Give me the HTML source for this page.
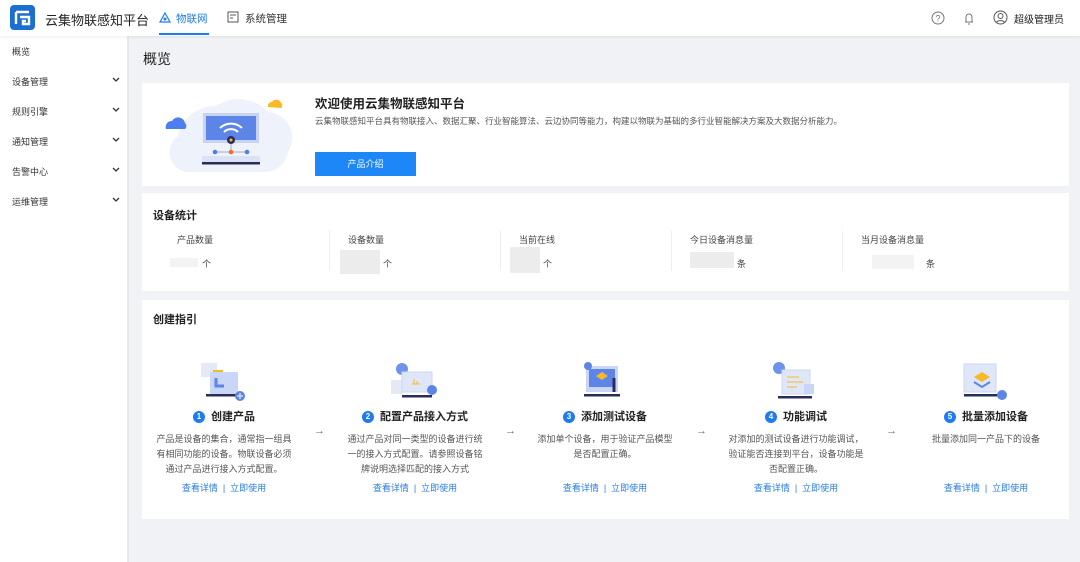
<!DOCTYPE html><html><head><meta charset="utf-8"><style>
*{margin:0;padding:0;box-sizing:border-box}
body{width:1080px;height:562px;overflow:hidden;background:#f0f2f5;font-family:"Liberation Sans","Noto Sans CJK SC",sans-serif;color:#333;position:relative}
.a{position:absolute}
.hd{left:0;top:0;width:1080px;height:36px;background:#fff;box-shadow:0 1px 3px rgba(0,0,0,.08);z-index:2}
.sb{left:0;top:36px;width:129px;height:526px;background:#fff;border-right:2px solid #e8e8e8}
.sb div{position:absolute;left:12px;font-size:9px;color:#333;width:112px}
.sb svg{position:absolute;right:4px;top:2px}
.card{background:#fff;left:142px;width:927px}
.t{font-size:11px;font-weight:bold;color:#222}
.lab{font-size:9px;color:#444}
.blk{background:#ececec}
.stp{position:absolute;width:170px;text-align:center;top:408px}
.stp h4{font-size:11px;font-weight:bold;color:#222}
.stp h4 i{display:inline-block;width:12px;height:12px;border-radius:6px;background:#1e7bf2;color:#fff;font-style:normal;font-size:8px;line-height:12px;margin-right:6px;vertical-align:1px}
.stp p{font-size:9px;color:#555;line-height:15px;margin-top:8px;height:45px}
.stp .l{font-size:9px;color:#2a7de1;margin-top:4px}
.arr{font-size:11px;color:#666;top:425px}
</style></head><body>
<div class="a hd">
<svg class="a" style="left:10px;top:5px" width="25" height="25" viewBox="0 0 25 25"><rect width="25" height="25" rx="4" fill="#1a6fd1"/><path d="M6 7h13M6 7v12M10 12h9v7h-6v-3h3" stroke="#fff" stroke-width="2.4" fill="none"/></svg>
<div class="a" style="left:45px;top:10px;font-size:13px;color:#222">云集物联感知平台</div>
<svg class="a" style="left:159px;top:12px" width="12" height="12" viewBox="0 0 12 12"><path d="M6 1L11 10H1Z" fill="none" stroke="#1e7bf2" stroke-width="1.2"/><circle cx="6" cy="7" r="1.5" fill="#1e7bf2"/></svg>
<div class="a" style="left:176px;top:11px;font-size:10.5px;color:#1e7bf2">物联网</div>
<div class="a" style="left:159px;top:33px;width:50px;height:2px;background:#1e7bf2"></div>
<svg class="a" style="left:227px;top:11px" width="12" height="12" viewBox="0 0 12 12"><rect x="1" y="1" width="10" height="10" fill="none" stroke="#555"/><path d="M3 4h6M3 7h3" stroke="#555"/></svg>
<div class="a" style="left:245px;top:11px;font-size:10.5px;color:#333">系统管理</div>
<svg class="a" style="left:931px;top:11px" width="14" height="14"><circle cx="7" cy="7" r="6" fill="none" stroke="#777"/><text x="7" y="10.5" font-size="9" text-anchor="middle" fill="#777">?</text></svg>
<svg class="a" style="left:963px;top:11px" width="12" height="14"><path d="M2 11h8M3 11V6a3 3 0 0 1 6 0v5M5 13h2" fill="none" stroke="#777"/></svg>
<svg class="a" style="left:993px;top:10px" width="15" height="15"><circle cx="7.5" cy="7.5" r="6.5" fill="none" stroke="#555"/><circle cx="7.5" cy="6" r="2.5" fill="none" stroke="#555"/><path d="M3.5 12.5c1-2.5 7-2.5 8 0" fill="none" stroke="#555"/></svg>
<div class="a" style="left:1014px;top:11px;font-size:10px;color:#222">超级管理员</div>
</div>
<div class="a sb">
<div style="top:9px">概览</div>
<div style="top:39px">设备管理<svg width="8" height="6"><path d="M1 1l3 3 3-3" stroke="#333" stroke-width="1.3" fill="none"/></svg></div>
<div style="top:69px">规则引擎<svg width="8" height="6"><path d="M1 1l3 3 3-3" stroke="#333" stroke-width="1.3" fill="none"/></svg></div>
<div style="top:99px">通知管理<svg width="8" height="6"><path d="M1 1l3 3 3-3" stroke="#333" stroke-width="1.3" fill="none"/></svg></div>
<div style="top:129px">告警中心<svg width="8" height="6"><path d="M1 1l3 3 3-3" stroke="#333" stroke-width="1.3" fill="none"/></svg></div>
<div style="top:159px">运维管理<svg width="8" height="6"><path d="M1 1l3 3 3-3" stroke="#333" stroke-width="1.3" fill="none"/></svg></div>
</div>
<div class="a" style="left:143px;top:49px;font-size:14px;color:#222">概览</div>
<div class="a card" style="top:83px;height:103px"></div>
<svg class="a" style="left:164px;top:93px" width="130" height="82" viewBox="0 0 130 82"><path d="M22 79a20 20 0 0 1-8-36a38 38 0 0 1 38-30a40 40 0 0 1 52 6a26 26 0 0 1 20 40a24 24 0 0 1-20 20z" fill="#eef2fb"/><path d="M2 36a6 6 0 0 1 6-8a7 7 0 0 1 13 2a4 4 0 0 1 0 6z" fill="#4c7ef0"/><path d="M104 14a4 4 0 0 1 4-5a5 5 0 0 1 9 1a3 3 0 0 1 0 5z" fill="#f7b924"/><rect x="39" y="20" width="56" height="30" fill="#c7d3f3"/><rect x="42" y="23" width="50" height="24" fill="#5d85e8"/><path d="M56 35a16 16 0 0 1 22 0M60 39a10 10 0 0 1 14 0" stroke="#fff" stroke-width="2" fill="none"/><circle cx="67" cy="47" r="4" fill="#2a2d5a"/><circle cx="67" cy="47" r="1.5" fill="#f7b924"/><path d="M51 59h32M67 51v8" stroke="#aab" /><circle cx="51" cy="59" r="2.3" fill="#4c7ef0"/><circle cx="67" cy="59" r="2.3" fill="#f26b3a"/><circle cx="83" cy="59" r="2.3" fill="#4c7ef0"/><rect x="38" y="63" width="58" height="6" fill="#dbe2f5"/><rect x="38" y="69" width="58" height="2.5" fill="#2a2d5a"/></svg>
<div class="a" style="left:315px;top:93px;font-size:12.5px;font-weight:bold;color:#222">欢迎使用云集物联感知平台</div>
<div class="a" style="left:315px;top:115px;font-size:8.5px;color:#555">云集物联感知平台具有物联接入、数据汇聚、行业智能算法、云边协同等能力，构建以物联为基础的多行业智能解决方案及大数据分析能力。</div>
<div class="a" style="left:315px;top:152px;width:101px;height:24px;background:#1e87f7;color:#fff;font-size:9px;text-align:center;line-height:24px">产品介绍</div>

<div class="a card" style="top:193px;height:98px"></div>
<div class="a t" style="left:153px;top:207px">设备统计</div>
<div class="a lab" style="left:177px;top:233px">产品数量</div><div class="a lab" style="left:348px;top:233px">设备数量</div><div class="a lab" style="left:519px;top:233px">当前在线</div><div class="a lab" style="left:690px;top:233px">今日设备消息量</div><div class="a lab" style="left:861px;top:233px">当月设备消息量</div>
<div class="a blk" style="left:170px;top:258px;width:28px;height:9px;background:#f3f3f3"></div><div class="a lab" style="left:202px;top:257px">个</div>
<div class="a blk" style="left:340px;top:250px;width:40px;height:24px"></div><div class="a lab" style="left:383px;top:257px">个</div>
<div class="a blk" style="left:510px;top:247px;width:30px;height:26px"></div><div class="a lab" style="left:543px;top:257px">个</div>
<div class="a blk" style="left:690px;top:252px;width:44px;height:16px"></div><div class="a lab" style="left:737px;top:257px">条</div>
<div class="a blk" style="left:872px;top:255px;width:42px;height:14px;background:#f3f3f3"></div><div class="a lab" style="left:926px;top:257px">条</div>
<div class="a" style="left:329px;top:231px;width:1px;height:40px;background:#eee"></div><div class="a" style="left:500px;top:231px;width:1px;height:40px;background:#eee"></div><div class="a" style="left:671px;top:231px;width:1px;height:40px;background:#eee"></div><div class="a" style="left:842px;top:231px;width:1px;height:40px;background:#eee"></div>

<div class="a card" style="top:300px;height:219px"></div>
<div class="a t" style="left:153px;top:311px">创建指引</div>
<svg class="a" style="left:200px;top:362px" width="48" height="40"><rect x="1" y="1" width="16" height="14" fill="#e4e9f5"/><rect x="10" y="10" width="28" height="22" fill="#c9d6f5"/><rect x="13" y="8" width="10" height="2" fill="#f7b924"/><path d="M16 16v8h8" stroke="#5d85e8" stroke-width="3" fill="none"/><rect x="6" y="32" width="34" height="2.5" fill="#2a2d5a"/><circle cx="40" cy="34" r="5" fill="#5d85e8"/><path d="M40 31v6M37 34h6" stroke="#fff"/></svg>
<svg class="a" style="left:390px;top:362px" width="48" height="40"><circle cx="12" cy="7" r="6" fill="#6e93ec"/><rect x="1" y="18" width="12" height="14" fill="#e4e9f5"/><rect x="12" y="10" width="30" height="20" fill="#dfe6f8" stroke="#c9d6f5"/><path d="M24 22v-5M27 22v-3M22 22h8" stroke="#f7b924"/><rect x="12" y="33" width="30" height="2.5" fill="#2a2d5a"/><circle cx="42" cy="28" r="5" fill="#5d85e8"/></svg>
<svg class="a" style="left:580px;top:360px" width="48" height="42"><rect x="6" y="6" width="32" height="26" fill="#c9d6f5"/><rect x="9" y="9" width="26" height="18" fill="#5d85e8"/><path d="M16 16l6-4 6 4-6 4z" fill="#f7b924"/><circle cx="8" cy="6" r="4" fill="#5d85e8"/><rect x="4" y="34" width="36" height="2.5" fill="#2a2d5a"/><path d="M34 18v14" stroke="#2a2d5a" stroke-width="3"/></svg>
<svg class="a" style="left:770px;top:360px" width="48" height="42"><circle cx="9" cy="8" r="6" fill="#6e93ec"/><rect x="12" y="10" width="28" height="24" fill="#dfe6f8" stroke="#c9d6f5"/><path d="M17 17h12M17 22h16M17 27h10" stroke="#f7b924"/><rect x="34" y="24" width="10" height="10" fill="#c9d6f5"/><rect x="8" y="36" width="34" height="2.5" fill="#2a2d5a"/></svg>
<svg class="a" style="left:962px;top:362px" width="48" height="40"><rect x="2" y="2" width="32" height="28" fill="#dfe6f8" stroke="#c9d6f5"/><path d="M12 15l8-5 8 5-8 5z" fill="#f7b924"/><path d="M12 20l8 5 8-5" stroke="#5d85e8" stroke-width="2" fill="none"/><rect x="2" y="32" width="36" height="2.5" fill="#2a2d5a"/><circle cx="40" cy="33" r="5" fill="#5d85e8"/></svg>
<div class="stp" style="left:139px"><h4><i>1</i>创建产品</h4><p>产品是设备的集合，通常指一组具<br>有相同功能的设备。物联设备必须<br>通过产品进行接入方式配置。</p><div class="l">查看详情 &nbsp;|&nbsp; 立即使用</div></div>
<div class="stp" style="left:330px"><h4><i>2</i>配置产品接入方式</h4><p>通过产品对同一类型的设备进行统<br>一的接入方式配置。请参照设备铭<br>牌说明选择匹配的接入方式</p><div class="l">查看详情 &nbsp;|&nbsp; 立即使用</div></div>
<div class="stp" style="left:520px"><h4><i>3</i>添加测试设备</h4><p>添加单个设备，用于验证产品模型<br>是否配置正确。</p><div class="l">查看详情 &nbsp;|&nbsp; 立即使用</div></div>
<div class="stp" style="left:711px"><h4><i>4</i>功能调试</h4><p>对添加的测试设备进行功能调试，<br>验证能否连接到平台，设备功能是<br>否配置正确。</p><div class="l">查看详情 &nbsp;|&nbsp; 立即使用</div></div>
<div class="stp" style="left:901px"><h4><i>5</i>批量添加设备</h4><p>批量添加同一产品下的设备</p><div class="l">查看详情 &nbsp;|&nbsp; 立即使用</div></div>
<div class="a arr" style="left:314px">→</div><div class="a arr" style="left:505px">→</div><div class="a arr" style="left:696px">→</div><div class="a arr" style="left:886px">→</div>
</body></html>
